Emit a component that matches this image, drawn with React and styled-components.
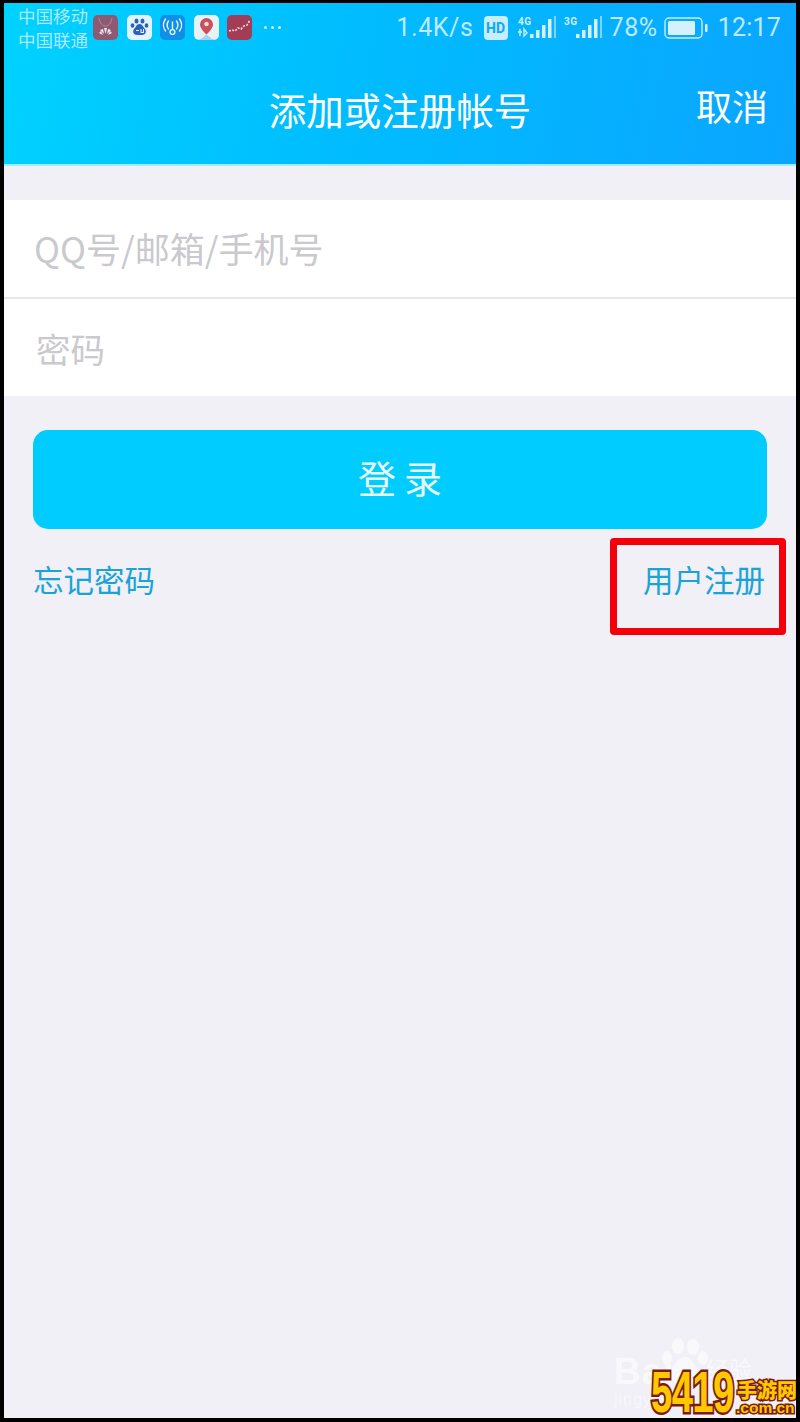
import React from "react";
import styled, { createGlobalStyle } from "styled-components";

const Global = createGlobalStyle`
  html, body { margin: 0; padding: 0; background: #000; }
  * { box-sizing: border-box; }
`;
const CJK = `"Noto Sans CJK SC", "Noto Sans", sans-serif`;

const Frame = styled.div`
  width: 800px;
  height: 1422px;
  padding: 3px 4px 4px 4px;
  background: #000;
  overflow: hidden;
`;
const Screen = styled.div`
  position: relative;
  height: 100%;
  background: #f0f0f6;
  font-family: ${CJK};
  overflow: hidden;
`;
const Header = styled.header`
  height: 163px;
  border-bottom: 2px solid #a5e9ff;
  background: linear-gradient(100deg, #00d2ff 0%, #00beff 40%, #0aa5ff 100%);
  color: #fff;
`;
const StatusBar = styled.div`
  height: 50px;
  padding: 0 15px 0 14px;
  display: flex;
  align-items: center;
  color: #cdeeff;
`;
const Carrier = styled.div`
  width: 75px;
  font-size: 17.5px;
  line-height: 24px;
  color: #aee9ff;
  white-space: nowrap;
`;
const AppIcons = styled.div`
  display: flex;
  gap: 8.5px;
  margin-top: -2px;
`;
const AppIcon = styled.svg`
  width: 25px;
  height: 25px;
  display: block;
`;
const Dots = styled.div`
  display: flex;
  gap: 4px;
  margin: -2px 0 0 12px;
`;
const Dot = styled.span`
  width: 3px;
  height: 3px;
  border-radius: 50%;
  background: #cdeeff;
`;
const StatusRight = styled.div`
  margin-left: auto;
  display: flex;
  align-items: center;
  font-family: Roboto, sans-serif;
  font-size: 25px;
  letter-spacing: 0.6px;
  gap: 8px;
  color: #bdeaff;
  margin-top: -1px;
`;
const Time = styled.span`
  margin-left: 1px;
  letter-spacing: 0.2px;
`;
const Percent = styled.span`
  margin-right: -2px;
`;
const HdIcon = styled.span`
  width: 24px;
  height: 24px;
  margin: 0 2px;
  border-radius: 4px;
  background: #c6eeff;
  color: #0aa8f5;
  font-size: 14px;
  font-weight: 700;
  letter-spacing: 0;
  display: flex;
  align-items: center;
  justify-content: center;
`;
const NavRow = styled.div`
  height: 110px;
  padding: 0 28px;
  display: grid;
  grid-template-columns: 1fr auto 1fr;
  align-items: center;
`;
const NavTitle = styled.div`
  grid-column: 2;
  font-size: 37.5px;
  white-space: nowrap;
`;
const NavAction = styled.div`
  grid-column: 3;
  justify-self: end;
  font-size: 36px;
  transform: translateY(-3px);
`;
const Form = styled.div`
  margin-top: 34px;
  background: #fff;
`;
const Field = styled.div`
  height: ${p => p.$h}px;
  display: flex;
  align-items: center;
  padding: 0 0 ${p => p.$pb}px ${p => p.$pl}px;
  font-size: ${p => p.$fs}px;
  color: #c9c9ce;
  & + & { border-top: 2px solid #e6e6ea; }
`;
const LoginButton = styled.div`
  margin: 34px 29px 0 29px;
  height: 99px;
  border-radius: 15px;
  background: #00ccff;
  color: #e8f9ff;
  font-size: 38px;
  display: flex;
  align-items: center;
  justify-content: center;
  letter-spacing: 8px;
  padding: 0 0 6px 8px;
`;
const LinkRow = styled.div`
  margin: 27px 31px 0 29px;
  display: flex;
  justify-content: space-between;
  align-items: center;
  height: 46px;
`;
const LinkText = styled.div`
  color: #1aa3d6;
  font-size: 30.5px;
`;
const Highlight = styled.div`
  position: absolute;
  left: 606px;
  top: 535px;
  width: 176px;
  height: 97px;
  border: 7px solid #f5000a;
  border-radius: 4px;
`;
const BaiduMark = styled.div`
  position: absolute;
  left: 610px;
  top: 1350px;
  font-family: "Liberation Sans", sans-serif;
  font-size: 37px;
  font-weight: 700;
  color: #f9f9fc;
  letter-spacing: 1px;
  line-height: 1;
`;
const BaiduCn = styled.span`
  position: absolute;
  left: 92px;
  top: 4px;
  font-family: ${CJK};
  font-size: 23px;
  font-weight: 400;
  white-space: nowrap;
  letter-spacing: 0;
`;
const BaiduSub = styled.div`
  position: absolute;
  left: 610px;
  top: 1388px;
  font-family: "Liberation Sans", sans-serif;
  font-size: 16px;
  color: #f7f7fa;
  letter-spacing: 1px;
`;
const Paw = styled.svg`
  position: absolute;
  left: 656px;
  top: 1334px;
  width: 48px;
  height: 48px;
`;
const SiteLogo = styled.div`
  position: absolute;
  right: 0;
  bottom: 0;
  width: 146px;
  height: 46px;
  font-family: ${CJK};
`;
const LogoNum = styled.div`
  position: absolute;
  left: 1px;
  top: -9px;
  font-family: "Liberation Sans", sans-serif;
  font-size: 58px;
  line-height: 58px;
  font-weight: 700;
  letter-spacing: -1px;
  color: #ffc800;
  -webkit-text-stroke: 5px #7a1c0e;
  paint-order: stroke fill;
  white-space: nowrap;
  transform: scaleX(0.66);
  transform-origin: left;
`;
const LogoCn = styled.div`
  position: absolute;
  left: 87px;
  top: 6px;
  font-size: 20px;
  line-height: 24px;
  font-weight: 900;
  color: #ffc800;
  -webkit-text-stroke: 3px #7a1c0e;
  paint-order: stroke fill;
  white-space: nowrap;
`;
const LogoDomain = styled.div`
  position: absolute;
  left: 86px;
  top: 27px;
  font-family: "Liberation Sans", sans-serif;
  font-size: 15.5px;
  line-height: 18px;
  font-weight: 700;
  letter-spacing: 0;
  color: #ffc800;
  -webkit-text-stroke: 3px #7a1c0e;
  paint-order: stroke fill;
  white-space: nowrap;
`;

const Signal = ({ label, extra, w }) => (
  <svg width={w} height="26" viewBox={`0 0 ${w} 26`} style={{ display: "block" }}>
    <text x="0" y="10" fontFamily="Roboto, sans-serif" fontWeight="700" fontSize="10" fill="#cdeeff">{label}</text>
    {extra && <path d="M2 14v7M0 17h4M6 14v7l3-3z" stroke="#cdeeff" strokeWidth="1.4" fill="none" />}
    <rect x={w - 26} y="19" width="3.5" height="4" fill="#d5f1ff" />
    <rect x={w - 20} y="15" width="3.5" height="8" fill="#d5f1ff" />
    <rect x={w - 14} y="10" width="3.5" height="13" fill="#d5f1ff" />
    <rect x={w - 8} y="4" width="3.5" height="19" fill="#d5f1ff" />
    <rect x={w - 2} y="1" width="2" height="22" fill="#7fd3ff" />
  </svg>
);

const Battery = () => (
  <svg width="45" height="24" viewBox="0 0 45 24" style={{ display: "block" }}>
    <rect x="1" y="2" width="37" height="20" rx="4" fill="none" stroke="#c6eeff" strokeWidth="1.4" />
    <rect x="4" y="5" width="27" height="14" rx="1.5" fill="#d5f1ff" />
    <rect x="41" y="8" width="2.5" height="8" rx="1" fill="#d5f1ff" />
  </svg>
);

export default function App() {
  return (
    <Frame>
      <Global />
      <Screen>
        <Header>
          <StatusBar>
            <Carrier>中国移动<br />中国联通</Carrier>
            <AppIcons>
              <AppIcon viewBox="0 0 25 25">
                <rect width="25" height="25" rx="5" fill="#8d5a72" />
                <path d="M6 3c1 6 4 8 6.500 8S18 9 19 3" stroke="#b38a9c" fill="none" />
                <path d="M12.500 19l-1.500-6h3zM11 19l-4-4 3-1zM14 19l4-4-3-1zM10 20l-4-2 2-2zM15 20l4-2-2-2z" fill="#efe4ea" />
              </AppIcon>
              <AppIcon viewBox="0 0 25 25">
                <rect width="25" height="25" rx="5" fill="#e2f3fb" />
                <g fill="#2a5fc4">
                  <ellipse cx="9.500" cy="6" rx="2" ry="2.600" />
                  <ellipse cx="15.500" cy="6" rx="2" ry="2.600" />
                  <ellipse cx="5.500" cy="10.500" rx="1.800" ry="2.300" />
                  <ellipse cx="19.500" cy="10.500" rx="1.800" ry="2.300" />
                  <path d="M12.500 9c3 0 3.500 3 5.500 5 2 3 0 6-3 6h-5c-3 0-5-3-3-6 2-2 2.500-5 5.500-5z" />
                </g>
                <path d="M9 15.500h3M14 14v3.500h2.500V14" stroke="#e2f3fb" strokeWidth="1.100" fill="none" />
              </AppIcon>
              <AppIcon viewBox="0 0 25 25">
                <rect width="25" height="25" rx="5" fill="#0f8fe8" />
                <g stroke="#e6f6ff" strokeWidth="1.400" fill="none" strokeLinecap="round">
                  <path d="M8.500 6a7 7 0 0 0 0 8M16.500 6a7 7 0 0 1 0 8M5.500 4a10 10 0 0 0 0 12M19.500 4a10 10 0 0 1 0 12" />
                  <circle cx="12.500" cy="17" r="2.400" />
                  <path d="M12.500 7v7.500" />
                </g>
              </AppIcon>
              <AppIcon viewBox="0 0 25 25">
                <rect width="25" height="25" rx="5" fill="#e6f2f6" />
                <path d="M12.500 3a6.500 6.500 0 0 1 6.500 6.500c0 3.500-4 7.500-6.500 10-2.500-2.500-6.500-6.500-6.500-10A6.500 6.500 0 0 1 12.500 3z" fill="#c8505a" />
                <circle cx="12.500" cy="9" r="2.300" fill="#f4d9d9" />
                <path d="M4 25c4-1 6-3 8.500-6 2.500 3 4.500 5 8.500 6z" fill="#a5d0ee" />
              </AppIcon>
              <AppIcon viewBox="0 0 25 25">
                <rect width="25" height="25" rx="5" fill="#a23d55" />
                <path d="M2 16l3-1 3 1 3-3 3 1 3-3 3-1 3-5" stroke="#f3d8df" strokeWidth="1.600" strokeDasharray="2 1.400" fill="none" />
              </AppIcon>
            </AppIcons>
            <Dots><Dot /><Dot /><Dot /></Dots>
            <StatusRight>
              <span>1.4K/s</span>
              <HdIcon>HD</HdIcon>
              <Signal label="4G" extra w={38} />
              <Signal label="3G" w={38} />
              <Percent>78%</Percent>
              <Battery />
              <Time>12:17</Time>
            </StatusRight>
          </StatusBar>
          <NavRow>
            <NavTitle>添加或注册帐号</NavTitle>
            <NavAction>取消</NavAction>
          </NavRow>
        </Header>
        <Form>
          <Field $h={97} $pl={30} $pb={3} $fs={35}>QQ号/邮箱/手机号</Field>
          <Field $h={99} $pl={32} $pb={0} $fs={34.5}>密码</Field>
        </Form>
        <LoginButton>登录</LoginButton>
        <LinkRow>
          <LinkText>忘记密码</LinkText>
          <LinkText>用户注册</LinkText>
        </LinkRow>
        <Highlight />
        <Paw viewBox="0 0 48 48">
          <g fill="#f9f9fc">
            <ellipse cx="18" cy="9" rx="6" ry="8" />
            <ellipse cx="33" cy="10" rx="6" ry="8" />
            <ellipse cx="7" cy="21" rx="5" ry="7" />
            <ellipse cx="43" cy="21" rx="5" ry="7" />
            <path d="M25 20c6 0 8 6 12 11 5 7 1 15-7 15H19c-8 0-11-8-7-15 4-5 7-11 13-11z" />
          </g>
        </Paw>
        <BaiduMark>Bai<BaiduCn>经验</BaiduCn></BaiduMark>
        <BaiduSub>jingyan</BaiduSub>
        <SiteLogo>
          <LogoNum>5419</LogoNum>
          <LogoCn>手游网</LogoCn>
          <LogoDomain>.com.cn</LogoDomain>
        </SiteLogo>
      </Screen>
    </Frame>
  );
}
